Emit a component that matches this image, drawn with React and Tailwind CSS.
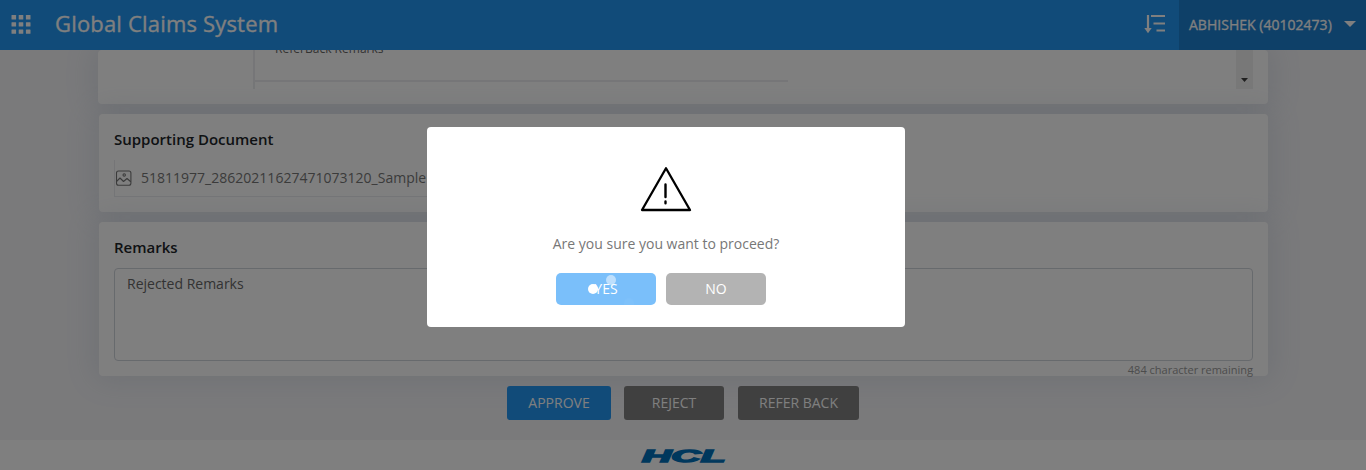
import React from "react";

const CARD = "rounded bg-white shadow-[0_0_30px_4px_rgba(110,135,165,0.16)]";

function Header() {
  return (
    <header className="relative z-10 flex h-[50px] shrink-0 items-center bg-[#2297f3] text-white">
      <svg className="ml-[11px]" width="20" height="20" viewBox="0 0 20 20" fill="white">
        {[0, 7.2, 14.4].map((y) => (
          <g key={y}>
            <rect x="0.5" y={y} width="4.6" height="4.400" rx="0.500" />
            <rect x="7.700" y={y} width="4.6" height="4.400" rx="0.500" />
            <rect x="14.900" y={y} width="4.6" height="4.400" rx="0.500" />
          </g>
        ))}
      </svg>
      <h1 className="ml-[24px] pb-[5px] text-[22px] leading-[30px] tracking-[0.18px] whitespace-nowrap [-webkit-text-stroke:0.3px_white]">Global Claims System</h1>
      <svg className="mr-[13px] ml-auto" width="22" height="20" viewBox="0 0 22 20" fill="none" stroke="white">
        <path d="M4 0v14" strokeWidth="2.200" />
        <path d="M0.300 13h7.400l-3.700 5.200z" fill="white" stroke="none" />
        <path d="M7 1h14M9.500 8.500h11.500M12.500 15.500h8.500" strokeWidth="2" />
      </svg>
      <div className="flex h-full w-[187px] items-center bg-[#1d80d0] pl-[10px]">
        <span className="w-[155px] pb-[2px] text-[14px] tracking-[0.02px] whitespace-nowrap [-webkit-text-stroke:0.3px_white]">ABHISHEK (40102473)</span>
        <svg className="-mt-[2px]" width="12" height="6" viewBox="0 0 12 6" fill="white">
          <path d="M0 0h12L6 6z" />
        </svg>
      </div>
    </header>
  );
}

function Dialog() {
  return (
    <div className="fixed inset-0 z-20 bg-black/50 pt-[127px] pl-[427px]">
      <div className="flex h-[200px] w-[478px] flex-col items-center rounded bg-white pt-[39px]">
        <svg width="52" height="46" viewBox="0 0 52 46" fill="none" stroke="black" strokeLinejoin="round" strokeLinecap="round">
          <path d="M26 2.200L50 44H2z" strokeWidth="2.300" />
          <path d="M25.500 18.500v12.500M25.500 35.500v1.800" strokeWidth="2.400" />
        </svg>
        <p className="mt-[22px] text-[14px] leading-[20px] text-[#777]">Are you sure you want to proceed?</p>
        <div className="mt-[19px] mr-[10px] flex gap-[10px] text-[14px] text-white">
          <button className="relative h-8 w-[100px] rounded-[5px] bg-[#7abffa] pb-[2px]">
            YES
            <span className="absolute top-[11px] left-8 size-[10px] rounded-full bg-white" />
            <span className="absolute top-[2px] left-[50px] size-[10px] rounded-full bg-white/50" />
            <span className="absolute top-[25px] left-[68px] h-[7px] w-[10px] rounded-t-full bg-white/3" />
          </button>
          <button className="h-8 w-[100px] rounded-[5px] bg-[#b3b3b3] pb-[2px]">NO</button>
        </div>
      </div>
    </div>
  );
}

export default function App() {
  return (
    <div className="flex h-[470px] flex-col overflow-hidden bg-[#f4f4f7] font-['Open_Sans','Noto_Sans',sans-serif]">
      <Header />
      <main className="flex h-[390px] shrink-0 flex-col">
        <section className={`${CARD} mr-[98px] ml-[98px] flex h-[54px] shrink-0 justify-between pr-[15px] pl-[155px]`}>
          <div className="h-[39px] w-[535px] border-l-2 border-[#ecedf0]">
            <div className="flow-root h-8 border-b-2 border-[#ecedf0] pl-5">
              <p className="-mt-[11px] text-[12px] leading-[20px] tracking-[0.02px] text-[#666]">ReferBack Remarks</p>
            </div>
          </div>
          <div className="flex h-[39px] w-[17px] items-end justify-center bg-[#f1f1f1] pb-[7px]">
            <svg width="7" height="4" viewBox="0 0 7 4" fill="#404040">
              <path d="M0 0h7L3.500 4z" />
            </svg>
          </div>
        </section>
        <section className={`${CARD} mt-[10px] mr-[98px] ml-[99px] h-[98px] shrink-0 px-[15px] pt-[15px]`}>
          <h2 className="text-[15px] leading-[21px] font-semibold text-[#212529]">Supporting Document</h2>
          <div className="mt-[10px] flex h-[37px] w-[500px] items-center border-b border-l border-[#eaebef] pb-px text-[#777]">
            <svg width="17" height="16" viewBox="0 0 17 16" fill="none" stroke="currentColor" strokeWidth="1.100" strokeLinejoin="round" strokeLinecap="round">
              <rect x="1.500" y="1" width="14.400" height="14.200" rx="2" />
              <circle cx="9.200" cy="5" r="1.200" />
              <path d="M1.500 11.500l3.500-3.500L8.500 11.500l3.500-3L15.500 11.500" />
            </svg>
            <span className="ml-[9px] text-[14px] tracking-[0.01px]">51811977_28620211627471073120_Sample</span>
          </div>
        </section>
        <section className={`${CARD} mt-[10px] mr-[98px] ml-[99px] h-[154px] shrink-0 px-[15px] pt-[15px]`}>
          <h2 className="text-[15px] leading-[21px] font-semibold text-[#212529]">Remarks</h2>
          <div className="mt-[10px] h-[93px] rounded border border-[#ced4da] px-3 pt-[5px] text-[14px] leading-[20px] text-[#666]">Rejected Remarks</div>
          <p className="text-right text-[11px] leading-[18px] text-[#999]">484 character remaining</p>
        </section>
        <div className="mt-[10px] ml-[507px] flex text-[14px] text-white">
          <button className="h-[34px] w-[104px] rounded-[3px] bg-[#2297f3] pb-[2px]">APPROVE</button>
          <button className="ml-[13px] h-[34px] w-[100px] rounded-[3px] bg-[#808080] pb-[2px]">REJECT</button>
          <button className="ml-[14px] h-[34px] w-[121px] rounded-[3px] bg-[#808080] pb-[2px]">REFER BACK</button>
        </div>
      </main>
      <footer className="flex h-[30px] shrink-0 justify-center bg-white pt-[7px]">
        <svg width="88" height="20" viewBox="0 0 88 20" aria-label="HCL">
          <text x="3" y="15.400" textLength="83.500" lengthAdjust="spacingAndGlyphs" className="fill-[#0070bb] font-['Liberation_Sans'] text-[16px] font-bold italic" stroke="#0070bb" strokeWidth="1.300">HCL</text>
        </svg>
      </footer>
      <Dialog />
    </div>
  );
}
